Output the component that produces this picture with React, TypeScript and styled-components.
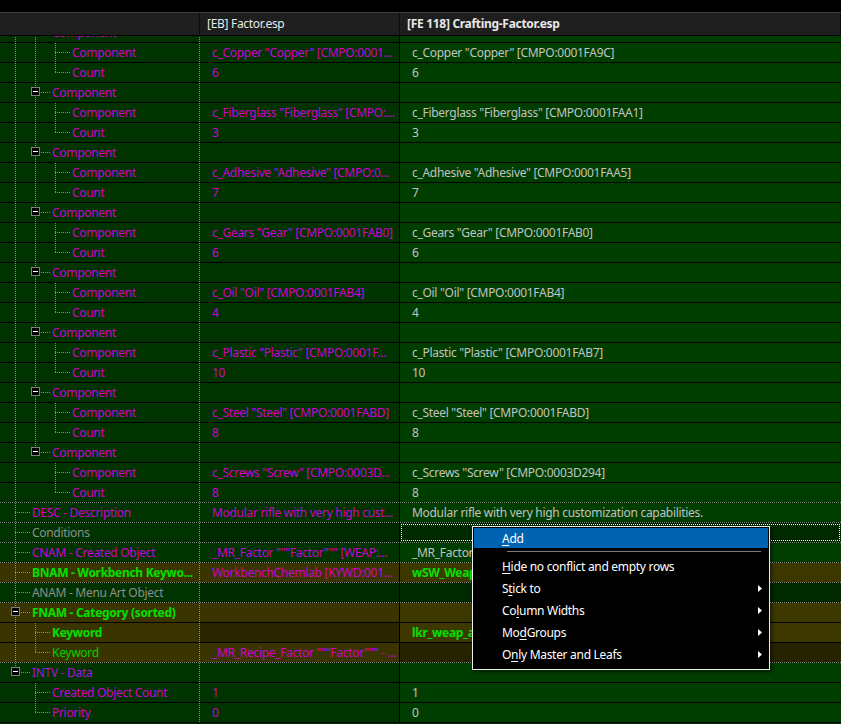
import React from 'react';
import styled, { createGlobalStyle } from 'styled-components';

const FONT = `'Noto Sans', 'DejaVu Sans', sans-serif`;

const GlobalStyle = createGlobalStyle`
  html, body { margin: 0; padding: 0; background: #000; }
  body { font-family: ${FONT}; font-size: 12px; }
`;

type Line = 'none' | 'full' | 'top';
type Tone = 'mag' | 'purple' | 'gray' | 'green' | 'greenBold' | 'light';
type Bg = 'green' | 'greenDark' | 'olive' | 'oliveDark';

const BG: Record<Bg, [string, string]> = {
  green: ['#003300', '#003e00'],
  greenDark: ['#002900', '#002900'],
  olive: ['#3a3500', '#3c3800'],
  oliveDark: ['#2a2600', '#262300'],
};

const TONE: Record<Tone, { c: string; w: number }> = {
  mag: { c: '#d000d0', w: 400 },
  purple: { c: '#b010dc', w: 400 },
  gray: { c: '#8e8e8e', w: 400 },
  green: { c: '#00d000', w: 400 },
  greenBold: { c: '#00e000', w: 700 },
  light: { c: '#c2c2c2', w: 400 },
};

interface RowData {
  guides: Line[];
  conn: Line;
  box?: boolean;
  label: string;
  tone: Tone;
  v2?: string;
  v2Tone?: Tone;
  v3?: string;
  v3Tone?: Tone;
  bg1?: Bg;
  bg2?: Bg;
  bg3?: Bg;
  focus3?: boolean;
}

const comps: [string, string, string][] = [
  ['c_Copper "Copper" [CMPO:0001...', 'c_Copper "Copper" [CMPO:0001FA9C]', '6'],
  ['c_Fiberglass "Fiberglass" [CMPO:...', 'c_Fiberglass "Fiberglass" [CMPO:0001FAA1]', '3'],
  ['c_Adhesive "Adhesive" [CMPO:0...', 'c_Adhesive "Adhesive" [CMPO:0001FAA5]', '7'],
  ['c_Gears "Gear" [CMPO:0001FAB0]', 'c_Gears "Gear" [CMPO:0001FAB0]', '6'],
  ['c_Oil "Oil" [CMPO:0001FAB4]', 'c_Oil "Oil" [CMPO:0001FAB4]', '4'],
  ['c_Plastic "Plastic" [CMPO:0001F...', 'c_Plastic "Plastic" [CMPO:0001FAB7]', '10'],
  ['c_Steel "Steel" [CMPO:0001FABD]', 'c_Steel "Steel" [CMPO:0001FABD]', '8'],
  ['c_Screws "Screw" [CMPO:0003D...', 'c_Screws "Screw" [CMPO:0003D294]', '8'],
];

const rows: RowData[] = [];
comps.forEach(([v2, v3, count], i) => {
  const last = i === comps.length - 1;
  rows.push({ guides: ['full'], conn: last ? 'top' : 'full', box: true, label: 'Component', tone: 'mag' });
  rows.push({ guides: ['full', last ? 'none' : 'full'], conn: 'full', label: 'Component', tone: 'mag', v2, v2Tone: 'mag', v3, v3Tone: 'light' });
  rows.push({ guides: ['full', last ? 'none' : 'full'], conn: 'top', label: 'Count', tone: 'mag', v2: count, v2Tone: 'mag', v3: count, v3Tone: 'light' });
});
rows.push(
  { guides: [], conn: 'full', label: 'DESC - Description', tone: 'mag', v2: 'Modular rifle with very high cust...', v2Tone: 'mag', v3: 'Modular rifle with very high customization capabilities.', v3Tone: 'light' },
  { guides: [], conn: 'full', label: 'Conditions', tone: 'gray', bg2: 'greenDark', bg3: 'greenDark', focus3: true },
  { guides: [], conn: 'full', label: 'CNAM - Created Object', tone: 'mag', v2: '_MR_Factor """Factor""" [WEAP:...', v2Tone: 'mag', v3: '_MR_Factor """Factor""" [WEAP:0001F8AC]', v3Tone: 'light' },
  { guides: [], conn: 'full', label: 'BNAM - Workbench Keywo...', tone: 'greenBold', v2: 'WorkbenchChemlab [KYWD:001...', v2Tone: 'mag', v3: 'wSW_WeaponsBench [KYWD:0A00086F]', v3Tone: 'greenBold', bg1: 'olive', bg2: 'olive', bg3: 'olive' },
  { guides: [], conn: 'full', label: 'ANAM - Menu Art Object', tone: 'gray', bg1: 'green', bg2: 'greenDark', bg3: 'greenDark' },
  { guides: [], conn: 'full', box: true, label: 'FNAM - Category (sorted)', tone: 'greenBold', bg1: 'olive', bg2: 'olive', bg3: 'olive' },
  { guides: ['full'], conn: 'full', label: 'Keyword', tone: 'greenBold', v3: 'lkr_weap_ammo [KYWD:0A000D21]', v3Tone: 'greenBold', bg1: 'olive', bg2: 'oliveDark', bg3: 'olive' },
  { guides: ['full'], conn: 'top', label: 'Keyword', tone: 'green', v2: '_MR_Recipe_Factor """Factor""" - ...', v2Tone: 'mag', bg1: 'olive', bg2: 'olive', bg3: 'oliveDark' },
  { guides: [], conn: 'top', box: true, label: 'INTV - Data', tone: 'purple' },
  { guides: ['none'], conn: 'full', label: 'Created Object Count', tone: 'mag', v2: '1', v2Tone: 'mag', v3: '1', v3Tone: 'light' },
  { guides: ['none'], conn: 'top', label: 'Priority', tone: 'mag', v2: '0', v2Tone: 'mag', v3: '0', v3Tone: 'light' },
);

const DOT = '#8c8c8c';
const dotV = `repeating-linear-gradient(180deg, ${DOT} 0 1px, transparent 1px 2px)`;
const dotH = `repeating-linear-gradient(90deg, ${DOT} 0 1px, transparent 1px 2px)`;

const Window = styled.div`
  position: relative;
  width: 841px;
  height: 724px;
  overflow: hidden;
  display: flex;
  flex-direction: column;
  background: #000;
  font-family: ${FONT};
  font-size: 12px;
  letter-spacing: -0.3px;
`;

const TopStrip = styled.div`
  flex: none;
  height: 12px;
  background: #000;
`;

const Header = styled.div`
  flex: none;
  display: flex;
  height: 22px;
  border-top: 1px solid #3c3c3c;
  border-bottom: 1px solid #000;
  background: #1e1e1e;
`;

const HeadCell = styled.div<{ $w?: number; $bold?: boolean }>`
  ${(p) => (p.$w ? `width: ${p.$w}px; flex: none;` : 'flex: 1;')}
  box-sizing: border-box;
  border-right: 1px solid #0c0c0c;
  padding-left: 7px;
  line-height: 22px;
  color: #e8e8e8;
  font-weight: ${(p) => (p.$bold ? 700 : 400)};
  white-space: nowrap;
  overflow: hidden;
`;

const Body = styled.div`
  flex: 1;
  overflow: hidden;
  background: #003300;
`;

const Scroller = styled.div`
  margin-top: -14px;
  display: flex;
  flex-direction: column;
`;

const Sep = styled.div<{ $dotted: boolean }>`
  flex: none;
  height: 1px;
  background: ${(p) => (p.$dotted ? `repeating-linear-gradient(90deg, ${DOT} 0 1px, #000 1px 2px)` : '#000')};
`;

const RowLine = styled.div`
  flex: none;
  display: flex;
  height: 19px;
`;

const TreeCell = styled.div<{ $bg: string }>`
  width: 200px;
  flex: none;
  box-sizing: border-box;
  display: flex;
  padding-left: 5px;
  border-right: 1px dotted ${DOT};
  background: ${(p) => p.$bg};
  overflow: hidden;
`;

const Guide = styled.div<{ $line: Line }>`
  width: 20px;
  height: 19px;
  flex: none;
  background-image: ${(p) => (p.$line === 'none' ? 'none' : dotV)};
  background-size: 1px ${(p) => (p.$line === 'top' ? '10px' : '100%')};
  background-position: 10px 0;
  background-repeat: no-repeat;
`;

const Connector = styled.div<{ $line: Line }>`
  width: 25px;
  height: 19px;
  flex: none;
  box-sizing: border-box;
  padding: 4px 0 0 6px;
  background-image: ${dotV}, ${dotH};
  background-size: 1px ${(p) => (p.$line === 'top' ? '10px' : '100%')}, 15px 1px;
  background-position: 10px 0, 10px 9px;
  background-repeat: no-repeat;
`;

const ExpandBox = styled.div`
  width: 9px;
  height: 9px;
  box-sizing: border-box;
  border: 1px solid #808080;
  background: linear-gradient(#fff, #fff) center / 5px 1px no-repeat, #000;
`;

const Text = styled.span<{ $tone: Tone }>`
  line-height: 19px;
  white-space: nowrap;
  color: ${(p) => TONE[p.$tone].c};
  font-weight: ${(p) => TONE[p.$tone].w};
`;

const Label = styled(Text)`
  padding-left: 2px;
`;

const ValueCell = styled.div<{ $bg: string; $w?: number; $focus?: boolean }>`
  ${(p) => (p.$w ? `width: ${p.$w}px; flex: none;` : 'flex: 1;')}
  box-sizing: border-box;
  padding-left: 12px;
  background: ${(p) => p.$bg};
  border-right: ${(p) => (p.$w ? '1px solid #000' : 'none')};
  overflow: hidden;
  display: flex;
  outline: ${(p) => (p.$focus ? '1px dotted #ffffff' : 'none')};
  outline-offset: -2px;
`;

const Menu = styled.div`
  position: absolute;
  left: 472px;
  top: 526px;
  width: 298px;
  box-sizing: border-box;
  border: 1px solid #eeeeee;
  background: #000;
  padding: 0 1px 4px 1px;
  box-shadow: 2px 2px 3px rgba(0, 0, 0, 0.5);
`;

const MenuItem = styled.div`
  height: 22px;
  box-sizing: border-box;
  padding: 1px 0;
`;

const MenuItemInner = styled.div<{ $active?: boolean }>`
  height: 20px;
  display: flex;
  align-items: center;
  padding-left: 28px;
  padding-right: 6px;
  color: #fff;
  background: ${(p) => (p.$active ? '#0063b1' : 'transparent')};
  white-space: nowrap;
`;

const MenuSep = styled.div`
  height: 1px;
  margin: 2px 7px 3px 33px;
  background: #7a7a7a;
`;

const Arrow = styled.svg`
  margin-left: auto;
  flex: none;
`;

const Hot = styled.u`
  text-decoration: underline;
  text-underline-offset: 2px;
`;

const TreeRow: React.FC<{ r: RowData }> = ({ r }) => {
  const bg1 = BG[r.bg1 ?? 'green'][0];
  const bg2 = BG[r.bg2 ?? r.bg1 ?? 'green'][0];
  const bg3 = BG[r.bg3 ?? r.bg1 ?? 'green'][1];
  return (
    <>
      <Sep $dotted={r.guides.length === 0} />
      <RowLine>
        <TreeCell $bg={bg1}>
          {r.guides.map((g, i) => (
            <Guide key={i} $line={g} />
          ))}
          <Connector $line={r.conn}>{r.box && <ExpandBox />}</Connector>
          <Label $tone={r.tone}>{r.label}</Label>
        </TreeCell>
        <ValueCell $bg={bg2} $w={200}>
          {r.v2 && <Text $tone={r.v2Tone ?? 'mag'}>{r.v2}</Text>}
        </ValueCell>
        <ValueCell $bg={bg3} $focus={r.focus3}>
          {r.v3 && <Text $tone={r.v3Tone ?? 'light'}>{r.v3}</Text>}
        </ValueCell>
      </RowLine>
    </>
  );
};

const SubArrow = () => (
  <Arrow width="4" height="7" viewBox="0 0 4 7">
    <polygon points="0,0 4,3.5 0,7" fill="#fff" />
  </Arrow>
);

export default function App() {
  return (
    <>
      <GlobalStyle />
      <Window>
        <TopStrip />
        <Header>
          <HeadCell $w={200} />
          <HeadCell $w={200}>[EB] Factor.esp</HeadCell>
          <HeadCell $bold>[FE 118] Crafting-Factor.esp</HeadCell>
        </Header>
        <Body>
          <Scroller>
            {rows.map((r, i) => (
              <TreeRow key={i} r={r} />
            ))}
            <Sep $dotted={false} />
          </Scroller>
        </Body>
        <Menu>
          <MenuItem>
            <MenuItemInner $active>
              <span><Hot>A</Hot>dd</span>
            </MenuItemInner>
          </MenuItem>
          <MenuSep />
          <MenuItem>
            <MenuItemInner>
              <span><Hot>H</Hot>ide no conflict and empty rows</span>
            </MenuItemInner>
          </MenuItem>
          <MenuItem>
            <MenuItemInner>
              <span>S<Hot>t</Hot>ick to</span>
              <SubArrow />
            </MenuItemInner>
          </MenuItem>
          <MenuItem>
            <MenuItemInner>
              <span>Co<Hot>l</Hot>umn Widths</span>
              <SubArrow />
            </MenuItemInner>
          </MenuItem>
          <MenuItem>
            <MenuItemInner>
              <span>Mo<Hot>d</Hot>Groups</span>
              <SubArrow />
            </MenuItemInner>
          </MenuItem>
          <MenuItem>
            <MenuItemInner>
              <span>O<Hot>n</Hot>ly Master and Leafs</span>
              <SubArrow />
            </MenuItemInner>
          </MenuItem>
        </Menu>
      </Window>
    </>
  );
}
